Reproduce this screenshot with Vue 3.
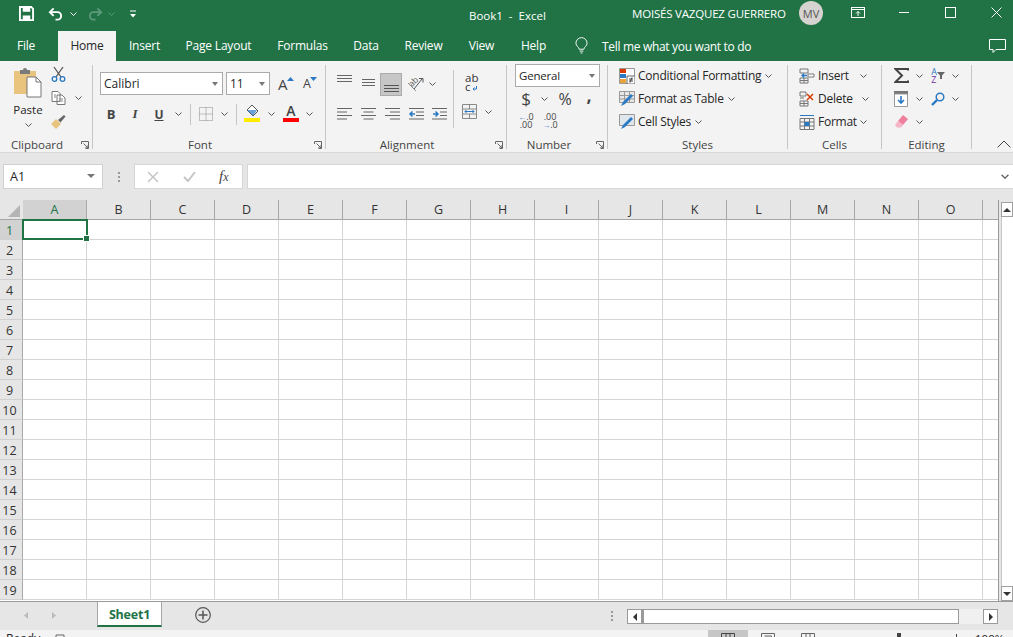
<template>
  <div class="excel">
    <!-- title bar -->
    <div class="titlebar">
      <div class="qat">
        <span class="slot s-save">
          <svg width="15" height="15" viewBox="0 0 16 16"><path d="M1 1h12l2 2v12H1z" fill="none" stroke="#fff" stroke-width="2"/><path d="M4 1h8v5H4zM4 10h8v5H4z" fill="#fff"/></svg>
        </span>
        <span class="slot s-undo">
          <svg width="15" height="14" viewBox="0 0 16 14"><path d="M6 1 2 5l4 4" fill="none" stroke="#fff" stroke-width="2"/><path d="M2 5h8a4 4 0 0 1 0 8H8" fill="none" stroke="#fff" stroke-width="2"/></svg>
        </span>
        <span class="slot s-chev"><svg class="chev" viewBox="0 0 7 4"><path d="M.5.5 3.5 3.500 6.500.5" stroke="#fff"/></svg></span>
        <span class="slot s-redo">
          <svg width="15" height="14" viewBox="0 0 16 14"><path d="M10 1l4 4-4 4" fill="none" stroke="#5c9a7b" stroke-width="2"/><path d="M14 5H6a4 4 0 0 0 0 8h2" fill="none" stroke="#5c9a7b" stroke-width="2"/></svg>
        </span>
        <span class="slot s-chev2"><svg class="chev" viewBox="0 0 7 4"><path d="M.5.5 3.5 3.500 6.500.5" stroke="#5c9a7b"/></svg></span>
        <span class="slot s-cust">
          <svg width="8" height="8" viewBox="0 0 8 8"><path d="M1 1h6" stroke="#fff"/><path d="M1 4h6L4 7.5z" fill="#fff"/></svg>
        </span>
      </div>
      <div class="doc-title">Book1&nbsp; -&nbsp; Excel</div>
      <div class="user">MOISÉS VAZQUEZ GUERRERO</div>
      <div class="avatar">MV</div>
      <div class="win">
        <span class="win-btn b-display">
          <svg width="14" height="11" viewBox="0 0 14 11"><rect x=".5" y=".5" width="13" height="10" fill="none" stroke="#fff"/><path d="M1 2.500h12" stroke="#fff"/><path d="M7 9V4.500M5 6.500l2-2 2 2" fill="none" stroke="#fff"/></svg>
        </span>
        <span class="win-btn b-min"><svg width="10" height="1" viewBox="0 0 10 1"><path d="M0 .5h10" stroke="#fff"/></svg></span>
        <span class="win-btn b-max"><svg width="11" height="11" viewBox="0 0 11 11"><rect x=".5" y=".5" width="10" height="10" fill="none" stroke="#fff"/></svg></span>
        <span class="win-btn b-close"><svg width="11" height="11" viewBox="0 0 11 11"><path d="M.5.5l10 10M10.500.5l-10 10" stroke="#fff"/></svg></span>
      </div>
    </div>

    <!-- tabs -->
    <div class="tabs">
      <div
        v-for="t in tabs"
        :key="t.name"
        class="tab"
        :class="{ active: t.name === 'Home' }"
        :style="{ width: t.w + 'px' }"
      >{{ t.name }}</div>
      <svg class="bulb" width="13" height="18" viewBox="0 0 14 18"><path d="M4.500 12.500C4.200 10 1 9 1 6a6 6 0 0 1 12 0c0 3-3.200 4-3.500 6.500z" fill="none" stroke="#fff"/><path d="M5 14.500h4M6 16.500h2" stroke="#fff"/></svg>
      <div class="tell">Tell me what you want to do</div>
      <svg class="comment" width="17" height="15" viewBox="0 0 17 15"><path d="M.5.500h16v10H7l-3 3v-3H.5z" fill="none" stroke="#fff"/></svg>
    </div>

    <!-- ribbon -->
    <div class="ribbon">
      <section class="group g-clip">
        <div class="clip-body">
          <div class="paste">
            <svg width="30" height="32" viewBox="0 0 30 32">
              <path d="M1 5h22v23H1z" fill="#e8c47f"/>
              <path d="M7 4h3a2 2 0 0 1 4 0h3v4H7z" fill="#7a7a7a"/>
              <path d="M14 11h9l5 5v15H14z" fill="#fff" stroke="#777"/>
              <path d="M23 11v5h5" fill="none" stroke="#777"/>
            </svg>
            <span class="paste-lbl">Paste</span>
            <svg class="chev" viewBox="0 0 7 4"><path d="M.5.5 3.500 3.500 6.500.5" stroke="#555"/></svg>
          </div>
          <div class="clip-tools">
            <svg width="15" height="16" viewBox="0 0 15 16"><path d="M3 1l7 10M12 1 5 11" stroke="#555" stroke-width="1.300"/><circle cx="3.500" cy="13" r="2.300" fill="none" stroke="#2b79c2" stroke-width="1.300"/><circle cx="11.500" cy="13" r="2.300" fill="none" stroke="#2b79c2" stroke-width="1.300"/></svg>
            <div class="copy-row">
              <svg width="15" height="14" viewBox="0 0 15 14"><path d="M1 .5h6l2 2v8H1zM6 4h5l3 3v6.500H6z" fill="#fff" stroke="#777"/><path d="M3 4h2M3 6h2M8 8h4M8 10h4" stroke="#888"/></svg>
              <svg class="chev" viewBox="0 0 7 4"><path d="M.5.5 3.500 3.500 6.500.5" stroke="#555"/></svg>
            </div>
            <svg class="painter" width="16" height="15" viewBox="0 0 16 15"><path d="M1 10 6 5l5 5-5 5z" fill="#e8c47f"/><path d="M8 6l6-5 1.500 1.500-5 6z" fill="#666"/></svg>
          </div>
        </div>
        <div class="group-label l-clip">Clipboard</div>
        <svg class="launcher" viewBox="0 0 8 8"><path d="M.5 3V.5h7v7H5M2.500 2.500 7 7M7 4v3H4" fill="none" stroke="#666"/></svg>
      </section>

      <section class="group g-font">
        <div class="font-row1">
          <div class="combo c-name">Calibri<i class="tri"></i></div>
          <div class="combo c-size">11<i class="tri"></i></div>
          <span class="big-a a-up">A<svg width="7" height="4" viewBox="0 0 7 4"><path d="M0 4l3.500-4L7 4z" fill="#2b79c2"/></svg></span>
          <span class="big-a a-down">A<svg width="7" height="4" viewBox="0 0 7 4"><path d="M0 0l3.500 4L7 0z" fill="#2b79c2"/></svg></span>
        </div>
        <div class="tools font-row2">
          <span class="cell w24 fb">B</span>
          <span class="cell w24 fi">I</span>
          <span class="cell w24 fu">U</span>
          <span class="cell w14"><svg class="chev" viewBox="0 0 7 4"><path d="M.5.5 3.500 3.500 6.500.5" stroke="#555"/></svg></span>
          <span class="cell w10"><i class="vsep"></i></span>
          <span class="cell w20 border-ic">
            <svg width="14" height="14" viewBox="0 0 14 14"><path d="M.5.500h13v13H.5zM7 .5v13M.5 7h13" fill="none" stroke="#888" stroke-dasharray="1 1"/></svg>
          </span>
          <span class="cell w18"><svg class="chev" viewBox="0 0 7 4"><path d="M.5.5 3.500 3.500 6.500.5" stroke="#555"/></svg></span>
          <span class="cell w6"><i class="vsep"></i></span>
          <span class="cell w26 fill-ic">
            <svg width="16" height="18" viewBox="0 0 16 18"><path d="M8 1l6 6-5 5-6-6z" fill="#fff" stroke="#555"/><path d="M3 6h10l-4 6z" fill="#2b79c2" opacity=".7"/><rect y="14" width="16" height="4" fill="#ffeb00"/></svg>
          </span>
          <span class="cell w12"><svg class="chev" viewBox="0 0 7 4"><path d="M.5.5 3.500 3.500 6.500.5" stroke="#555"/></svg></span>
          <span class="cell w28 color-a">A<i class="red-bar"></i></span>
          <span class="cell w8"><svg class="chev" viewBox="0 0 7 4"><path d="M.5.5 3.500 3.500 6.500.5" stroke="#555"/></svg></span>
        </div>
        <div class="group-label l-font">Font</div>
        <svg class="launcher" viewBox="0 0 8 8"><path d="M.5 3V.5h7v7H5M2.500 2.500 7 7M7 4v3H4" fill="none" stroke="#666"/></svg>
      </section>

      <section class="group g-align">
        <div class="align-body">
          <div class="align-left">
            <div class="tools al-row1">
              <span class="cell w24 v-top"><svg width="15" height="8" viewBox="0 0 15 8"><path d="M0 .5h15M0 3.500h15M0 6.500h15" stroke="#666"/></svg></span>
              <span class="cell w24 v-mid"><svg width="13" height="8" viewBox="0 0 13 8"><path d="M0 .5h13M0 3.500h13M0 6.500h13" stroke="#666"/></svg></span>
              <span class="cell w22 picked"><svg width="15" height="8" viewBox="0 0 15 8"><path d="M0 .5h15M0 3.500h15M0 6.500h15" stroke="#555"/></svg></span>
              <span class="cell w26">
                <svg class="orient" width="17" height="16" viewBox="0 0 17 16"><text x="2" y="10" transform="rotate(-45 5 7)" font-size="8.500" font-family="Open Sans, sans-serif" fill="#555">ab</text><path d="M1 7l8 8" stroke="#888"/><path d="M7 13 15 3" stroke="#555"/><path d="M12 2.500h4v4" fill="none" stroke="#555"/></svg>
              </span>
              <span class="cell w8"><svg class="chev" viewBox="0 0 7 4"><path d="M.5.5 3.500 3.500 6.500.5" stroke="#555"/></svg></span>
            </div>
            <div class="tools al-row2">
              <span class="cell w24"><svg width="15" height="12" viewBox="0 0 15 12"><path d="M0 .5h15M0 4h10M0 7.500h15M0 11h10" stroke="#666"/></svg></span>
              <span class="cell w24"><svg width="15" height="12" viewBox="0 0 15 12"><path d="M0 .5h15M2.500 4h10M0 7.500h15M2.500 11h10" stroke="#666"/></svg></span>
              <span class="cell w24"><svg width="15" height="12" viewBox="0 0 15 12"><path d="M0 .5h15M5 4h10M0 7.500h15M5 11h10" stroke="#666"/></svg></span>
              <span class="cell w24"><svg width="16" height="12" viewBox="0 0 16 12"><path d="M1 .5h15M8 4h8M8 7.500h8M1 11h15" stroke="#666"/><path d="M7 6H2M4.500 3.500 2 6l2.500 2.500" fill="none" stroke="#2b79c2" stroke-width="1.500"/></svg></span>
              <span class="cell w24"><svg width="16" height="12" viewBox="0 0 16 12"><path d="M0 .5h15M8 4h7M8 7.500h7M0 11h15" stroke="#666"/><path d="M1 6h5M3.500 3.500 6 6 3.500 8.500" fill="none" stroke="#2b79c2" stroke-width="1.500"/></svg></span>
            </div>
          </div>
          <i class="vsep tall"></i>
          <div class="align-right">
            <div class="wrap-txt">ab<br>c<svg width="5" height="5" viewBox="0 0 5 5"><path d="M4.500 0v3H1M2.500 1.500 1 3l1.500 1.500" fill="none" stroke="#2b79c2"/></svg></div>
            <div class="merge">
              <svg width="15" height="15" viewBox="0 0 15 15"><path d="M.5.500h14v14H.5zM.5 5h14M.5 10h14M7.500.5V5M7.500 10v4.500" fill="none" stroke="#888"/><path d="M3 7.500h9M4.500 6 3 7.500 4.500 9M10.500 6 12 7.500 10.500 9" fill="none" stroke="#2b79c2"/></svg>
              <svg class="chev" viewBox="0 0 7 4"><path d="M.5.5 3.500 3.500 6.500.5" stroke="#555"/></svg>
            </div>
          </div>
        </div>
        <div class="group-label l-align">Alignment</div>
        <svg class="launcher" viewBox="0 0 8 8"><path d="M.5 3V.5h7v7H5M2.500 2.500 7 7M7 4v3H4" fill="none" stroke="#666"/></svg>
      </section>

      <section class="group g-num">
        <div class="combo c-general">General<i class="tri"></i></div>
        <div class="tools num-row">
          <span class="cell w22 dollar">$</span>
          <span class="cell w14"><svg class="chev" viewBox="0 0 7 4"><path d="M.5.5 3.500 3.500 6.500.5" stroke="#555"/></svg></span>
          <span class="cell w28 pct">%</span>
          <span class="cell w20 comma">,</span>
        </div>
        <div class="tools dec-row">
          <span class="cell w24 dec"><b class="dec-a"><i class="ar">←</i>.0</b><b>.00</b></span>
          <span class="cell w24 dec"><b>.00</b><b class="dec-a"><i class="ar">→</i>.0</b></span>
        </div>
        <div class="group-label l-num">Number</div>
        <svg class="launcher" viewBox="0 0 8 8"><path d="M.5 3V.5h7v7H5M2.500 2.500 7 7M7 4v3H4" fill="none" stroke="#666"/></svg>
      </section>

      <section class="group g-styles">
        <div class="list">
          <div class="list-item">
            <svg width="16" height="16" viewBox="0 0 16 16"><path d="M.5.500h15v15H.5z" fill="#fff" stroke="#999"/><path d="M1 1h6v4H1z" fill="#d83b01"/><path d="M1 6h6v4H1z" fill="#2b79c2"/><path d="M1 11h6v4H1z" fill="#e8a33d"/><path d="M8 8h8v8H8z" fill="#fff" stroke="#666"/><path d="M10 11h4M10 13h4M13 9.500l-2 5" stroke="#444" fill="none"/></svg>
            <span>Conditional Formatting</span>
            <svg class="chev" viewBox="0 0 7 4"><path d="M.5.5 3.500 3.500 6.500.5" stroke="#555"/></svg>
          </div>
          <div class="list-item">
            <svg width="16" height="16" viewBox="0 0 16 16"><path d="M.5.500h15v11H.5z" fill="#e7e7e7" stroke="#999"/><path d="M5.500 1v10M10.500 1v10M1 4.500h14M1 8h14" stroke="#999"/><path d="M2 15l2-4 8-8 2 2-8 8z" fill="#2b79c2"/></svg>
            <span>Format as Table</span>
            <svg class="chev" viewBox="0 0 7 4"><path d="M.5.5 3.500 3.500 6.500.5" stroke="#555"/></svg>
          </div>
          <div class="list-item">
            <svg width="16" height="16" viewBox="0 0 16 16"><path d="M.5.500h15v11H.5z" fill="#dfe6ec" stroke="#999"/><path d="M2 15l2-4 8-8 2 2-8 8z" fill="#2b79c2"/></svg>
            <span>Cell Styles</span>
            <svg class="chev" viewBox="0 0 7 4"><path d="M.5.5 3.500 3.500 6.500.5" stroke="#555"/></svg>
          </div>
        </div>
        <div class="group-label l-styles">Styles</div>
      </section>

      <section class="group g-cells">
        <div class="list">
          <div class="list-item">
            <svg width="16" height="16" viewBox="0 0 16 16"><path d="M1 1h8v4H1zM1 10h8v5H1zM5 10v5M1 12.500h8" fill="none" stroke="#777"/><path d="M9 6h6v3H9z" fill="#fff" stroke="#777"/><path d="M8 7.500H3M5 5.500l-2 2 2 2" fill="none" stroke="#2b79c2" stroke-width="1.300"/></svg>
            <span>Insert</span>
            <svg class="chev c-ins" viewBox="0 0 7 4"><path d="M.5.500 3.500 3.500 6.500.5" stroke="#555"/></svg>
          </div>
          <div class="list-item">
            <svg width="16" height="16" viewBox="0 0 16 16"><path d="M1 1h6v4H1zM1 10h8v5H1zM5 10v5M1 12.500h8" fill="none" stroke="#777"/><path d="M1 7h4" stroke="#777"/><path d="M8 3l6 6M14 3 8 9" stroke="#d83b01" stroke-width="1.500"/></svg>
            <span>Delete</span>
            <svg class="chev c-del" viewBox="0 0 7 4"><path d="M.5.500 3.500 3.500 6.500.5" stroke="#555"/></svg>
          </div>
          <div class="list-item">
            <svg width="16" height="16" viewBox="0 0 16 16"><path d="M1 4.500h14v11H1zM1 8h14M1 12h14M5.500 4.500v11M10.500 4.500v11" fill="none" stroke="#777"/><path d="M1 1.500h14" stroke="#2b79c2"/><path d="M5.500 8h5v4h-5z" fill="#2b79c2"/></svg>
            <span>Format</span>
            <svg class="chev c-fmt" viewBox="0 0 7 4"><path d="M.5.500 3.500 3.500 6.500.5" stroke="#555"/></svg>
          </div>
        </div>
        <div class="group-label l-cells">Cells</div>
      </section>

      <section class="group g-edit">
        <div class="tools ed-row1">
          <span class="cell w24"><svg width="15" height="15" viewBox="0 0 15 15"><path d="M14 2.500V1H1.500L8 7.500 1.500 14H14v-1.500" fill="none" stroke="#444" stroke-width="2"/></svg></span>
          <span class="cell w12"><svg class="chev" viewBox="0 0 7 4"><path d="M.5.5 3.500 3.500 6.500.5" stroke="#555"/></svg></span>
          <span class="cell w26 sort">
            <b class="az"><i class="az-a">A</i><i class="az-z">Z</i></b>
            <svg width="8" height="7" viewBox="0 0 8 7"><path d="M0 0h8L5 3.500V7H3V3.500z" fill="#666"/></svg>
          </span>
          <span class="cell w8"><svg class="chev" viewBox="0 0 7 4"><path d="M.5.5 3.500 3.500 6.500.5" stroke="#555"/></svg></span>
        </div>
        <div class="tools ed-row2">
          <span class="cell w24"><svg width="14" height="16" viewBox="0 0 14 16"><path d="M0 0h14v3H0z" fill="#777"/><path d="M.5 3h13v12.500H.5z" fill="#fff" stroke="#999"/><path d="M7 5v7M4 9l3 3 3-3" fill="none" stroke="#2b79c2" stroke-width="1.600"/></svg></span>
          <span class="cell w12"><svg class="chev" viewBox="0 0 7 4"><path d="M.5.5 3.500 3.500 6.500.5" stroke="#555"/></svg></span>
          <span class="cell w26"><svg width="14" height="14" viewBox="0 0 14 14"><circle cx="9" cy="5" r="3.800" fill="none" stroke="#2b79c2" stroke-width="1.500"/><path d="M6 8l-5 5" stroke="#2b79c2" stroke-width="2.400"/></svg></span>
          <span class="cell w8"><svg class="chev" viewBox="0 0 7 4"><path d="M.5.5 3.500 3.500 6.500.5" stroke="#555"/></svg></span>
        </div>
        <div class="tools ed-row3">
          <span class="cell w24"><svg width="14" height="13" viewBox="0 0 14 13"><path d="M9 0l5 4-5 6-5-4z" fill="#ef7f9d"/><path d="M4 6l5 4-2 2.500H3L1 10z" fill="#f5b5c6"/></svg></span>
          <span class="cell w12"><svg class="chev" viewBox="0 0 7 4"><path d="M.5.5 3.500 3.500 6.500.5" stroke="#555"/></svg></span>
        </div>
        <div class="group-label l-edit">Editing</div>
      </section>

      <svg class="collapse" width="14" height="8" viewBox="0 0 14 8"><path d="M.5 7.500 7 1l6.500 6.500" fill="none" stroke="#444"/></svg>
    </div>

    <!-- formula bar -->
    <div class="formula-bar">
      <div class="name-box">A1<i class="tri"></i></div>
      <div class="grip"><i></i><i></i><i></i></div>
      <div class="fx-box">
        <svg width="12" height="12" viewBox="0 0 12 12"><path d="M1 1l10 10M11 1 1 11" stroke="#c6c6c6" stroke-width="1.500"/></svg>
        <svg width="13" height="11" viewBox="0 0 13 11"><path d="M1 6l4 4 7-9" fill="none" stroke="#c6c6c6" stroke-width="2"/></svg>
        <span class="fx"><i>f</i><i class="fx-x">x</i></span>
      </div>
      <div class="fx-input">
        <svg class="chev chev-fx" viewBox="0 0 7 4"><path d="M.5.500 3.500 3.500 6.500.5" stroke="#666" stroke-width="1.200"/></svg>
      </div>
    </div>

    <!-- sheet -->
    <div class="sheet-wrap">
      <div class="sheet">
        <div class="col-head">
          <div class="corner"><svg width="12" height="12" viewBox="0 0 12 12"><path d="M12 0v12H0z" fill="#b4b4b4"/></svg></div>
          <div v-for="c in cols" :key="c" class="col" :class="{ sel: c === 'A' }">{{ c }}</div>
          <div class="col rest"></div>
        </div>
        <div v-for="r in rows" :key="r" class="row">
          <div class="row-num" :class="{ sel: r === 1 }">{{ r }}</div>
          <div v-for="c in cols" :key="c" class="cell-box"></div>
          <div class="cell-box rest"></div>
        </div>
        <div class="selection"><i class="handle"></i></div>
      </div>
      <div class="vscroll">
        <div class="sb-btn"><i class="up"></i></div>
        <div class="sb-thumb"></div>
        <div class="sb-btn"><i class="down"></i></div>
      </div>
    </div>

    <!-- sheet tabs -->
    <div class="sheet-tabs">
      <svg class="nav-a" width="4" height="7" viewBox="0 0 4 7"><path d="M4 0v7L0 3.500z" fill="#bbb"/></svg>
      <svg class="nav-b" width="4" height="7" viewBox="0 0 4 7"><path d="M0 0v7l4-3.500z" fill="#bbb"/></svg>
      <div class="sheet-tab">Sheet1</div>
      <svg class="add" width="16" height="16" viewBox="0 0 16 16"><circle cx="8" cy="8" r="7.300" fill="none" stroke="#555" stroke-width="1.200"/><path d="M8 3.500v9M3.500 8h9" stroke="#555" stroke-width="1.500"/></svg>
      <div class="grip grip-h"><i></i><i></i><i></i></div>
      <div class="hscroll">
        <div class="hbtn"><i class="left"></i></div>
        <div class="hthumb"></div>
        <div class="htrack"></div>
        <div class="hbtn"><i class="right"></i></div>
      </div>
    </div>

    <!-- status bar -->
    <div class="status">
      <span class="ready">Ready</span>
      <svg class="macro" width="12" height="12" viewBox="0 0 12 12"><path d="M2 1h8v10H2z" fill="none" stroke="#666"/></svg>
      <div class="views">
        <span class="view on"><svg width="14" height="11" viewBox="0 0 14 11"><path d="M.5.500h13v10H.5zM5 .5v10M9 .5v10" fill="none" stroke="#444"/></svg></span>
        <span class="view"><svg width="14" height="11" viewBox="0 0 14 11"><path d="M.5.500h13v10H.5zM3.500 3h7v8" fill="none" stroke="#666"/></svg></span>
        <span class="view"><svg width="14" height="11" viewBox="0 0 14 11"><path d="M.5.500h13v10H.5zM5 .5v10M9 .5v10" fill="none" stroke="#666"/></svg></span>
      </div>
      <i class="zoom-knob"></i>
      <i class="zoom-plus"></i>
      <span class="zoom-val">100%</span>
    </div>
  </div>
</template>

<script setup>
const tabs = [
  { name: 'File', w: 52 },
  { name: 'Home', w: 58 },
  { name: 'Insert', w: 57 },
  { name: 'Page Layout', w: 91 },
  { name: 'Formulas', w: 77 },
  { name: 'Data', w: 50 },
  { name: 'Review', w: 65 },
  { name: 'View', w: 51 },
  { name: 'Help', w: 53 }
]
const cols = 'ABCDEFGHIJKLMNO'.split('')
const rows = Array.from({ length: 19 }, (_, i) => i + 1)
</script>

<style>
html, body { margin: 0; overflow: hidden; background: #fff; }
</style>

<style scoped>
.excel {
  width: 1013px; height: 637px; overflow: hidden;
  display: flex; flex-direction: column;
  font-family: "Open Sans", "Noto Sans", sans-serif; font-size: 11.5px; color: #262626;
}
svg { display: block; flex: none; }
.chev { width: 7px; height: 4px; fill: none; }
.orient { overflow: visible; }

/* title bar */
.titlebar { height: 31px; background: #217346; color: #fff; display: flex; align-items: center; }
.qat { width: 469px; display: flex; align-items: center; flex: none; padding-bottom: 4px; box-sizing: border-box; }
.slot { display: flex; justify-content: center; flex: none; }
.s-save { width: 15px; margin-left: 19px; }
.s-undo { width: 15px; margin-left: 14px; }
.s-chev { width: 7px; margin-left: 7px; }
.s-redo { width: 15px; margin-left: 11px; }
.s-chev2 { width: 7px; margin-left: 5px; }
.s-cust { width: 8px; margin-left: 14px; }
.doc-title { width: 163px; flex: none; font-size: 11.5px; }
.user { width: 167px; flex: none; font-size: 11.5px; white-space: nowrap; letter-spacing: -.2px; margin-bottom: 5px; }
.avatar {
  width: 24px; height: 24px; border-radius: 50%; background: #d6d3d0; color: #555; margin-bottom: 5px;
  display: flex; align-items: center; justify-content: center; font-size: 11px; flex: none;
}
.win { display: flex; align-items: center; margin-bottom: 6px; }
.win-btn { display: block; flex: none; }
.b-display { margin-left: 28px; }
.b-min { margin-left: 34px; }
.b-max { margin-left: 36px; }
.b-close { margin-left: 35px; }

/* tabs */
.tabs { height: 30px; background: #217346; display: flex; align-items: center; color: #fff; font-size: 12px; }
.tab { height: 30px; line-height: 29px; text-align: center; flex: none; letter-spacing: -.2px; }
.tab:first-child { margin-right: 6px; }
.tab.active { background: #f3f3f3; color: #262626; }
.bulb { margin-left: 15px; }
.tell { margin-left: 14px; width: 387px; letter-spacing: -.32px; }

/* ribbon */
.ribbon {
  height: 92px; box-sizing: border-box; background: #f3f3f3; border-bottom: 1px solid #d8d8d8;
  padding-top: 4px; display: flex; align-items: flex-start;
}
.group { height: 84px; box-sizing: border-box; border-right: 1px solid #c6c6c6; position: relative; flex: none; }
.group-label { position: absolute; left: 0; bottom: -4px; width: 100%; text-align: center; color: #444; font-size: 11.5px; line-height: 16px; letter-spacing: 0; }
.launcher { position: absolute; right: 3px; bottom: 0; width: 8px; height: 8px; }
.g-clip { width: 93px; }
.g-font { width: 233px; }
.g-align { width: 181px; }
.g-num { width: 101px; }
.g-styles { width: 180px; }
.g-cells { width: 94px; }
.g-edit { width: 90px; }
.l-clip { width: 74px; }
.l-font { width: 214px; }
.l-align { width: 162px; }
.l-num { width: 84px; }

.tools { display: flex; align-items: center; }
.cell { display: flex; align-items: center; justify-content: center; flex: none; }
.w6 { width: 6px; } .w8 { width: 8px; } .w10 { width: 10px; } .w12 { width: 12px; }
.w14 { width: 14px; } .w18 { width: 18px; } .w20 { width: 20px; } .w22 { width: 22px; }
.w24 { width: 24px; } .w26 { width: 26px; } .w28 { width: 28px; }
.vsep { display: block; width: 1px; height: 21px; background: #c6c6c6; }
.vsep.tall { height: 58px; margin-top: 5px; flex: none; }

/* clipboard */
.clip-body { display: flex; padding: 1px 0 0 12px; }
.paste { width: 32px; display: flex; flex-direction: column; align-items: center; }
.paste-lbl { margin-top: 4px; line-height: 16px; font-size: 11.5px; }
.paste .chev { margin-top: 5px; }
.clip-tools { margin-left: 7px; display: flex; flex-direction: column; gap: 6px; }
.copy-row { display: flex; align-items: center; gap: 9px; padding-top: 3px; }
.painter { margin-top: 3px; margin-left: -1px; }

/* font */
.combo {
  box-sizing: border-box; background: #fff; border: 1px solid #ababab; height: 23px;
  display: flex; align-items: center; position: relative; padding-left: 3px; font-size: 12px;
}
.tri {
  display: block; width: 0; height: 0; border: 3.500px solid transparent; border-top: 4px solid #777; border-bottom: 0;
  position: absolute; right: 4px; top: 9px;
}
.font-row1 { display: flex; align-items: center; padding: 7px 0 0 7px; }
.c-name { width: 123px; }
.c-size { width: 44px; margin-left: 3px; }
.big-a { display: flex; align-items: flex-start; flex: none; font-size: 15px; color: #444; line-height: 20px; }
.big-a svg { margin-top: 3px; margin-left: -1px; }
.a-up { margin-left: 8px; width: 25px; }
.a-down { font-size: 12.500px; margin-left: 0; }
.font-row2 { padding: 8px 0 0 6px; height: 22px; }
.fb { font-weight: 700; font-size: 13px; color: #444; }
.fi { font-style: italic; font-family: "Liberation Serif", serif; font-weight: 700; font-size: 13px; color: #444; }
.fu { font-weight: 700; font-size: 12px; text-decoration: underline; color: #444; }
.border-ic { padding-left: 2px; box-sizing: border-box; margin-top: -1px; }
.fill-ic { margin-top: -3px; }
.color-a { position: relative; font-size: 14px; font-weight: 600; color: #444; height: 20px; align-items: flex-start; line-height: 15px; margin-top: -2px; }
.red-bar { position: absolute; left: 6px; bottom: 1px; width: 16px; height: 4px; background: #f00; }

/* alignment */
.align-body { display: flex; }
.align-left { width: 127px; padding-left: 6px; box-sizing: border-box; }
.al-row1 { height: 24px; margin-top: 7px; }
.al-row2 { height: 22px; margin-top: 7px; }
.v-top { align-self: flex-start; padding-top: 3px; }
.v-mid { align-self: flex-start; padding-top: 7px; }
.picked { height: 23px; background: #c6c6c6; border: 1px solid #ababab; box-sizing: border-box; align-items: flex-end; padding-bottom: 2px; }
.align-right { margin-left: 5px; display: flex; flex-direction: column; }
.wrap-txt { font-size: 11.5px; line-height: 9px; margin: 8px 0 0 6px; color: #333; height: 19px; }
.wrap-txt svg { display: inline-block; margin-left: 1px; }
.merge { display: flex; align-items: center; gap: 8px; margin-top: 12px; padding-left: 3px; }

/* number */
.c-general { width: 85px; margin: -1px 0 0 8px; font-size: 11.5px; letter-spacing: -.2px; }
.num-row { padding: 0 0 0 8px; height: 23px; }
.dollar { font-size: 17px; color: #444; }
.pct { font-size: 16px; color: #444; }
.comma { font-size: 18px; font-weight: 700; color: #444; line-height: 8px; padding-bottom: 8px; }
.dec-row { padding-left: 7px; }
.dec { flex-direction: column; height: 22px; font-size: 9px; line-height: 8.500px; color: #444; }
.dec b { font-weight: 400; display: block; }
.dec-a { white-space: nowrap; }
.ar { font-style: normal; color: #2b79c2; font-size: 8px; }

/* lists */
.list { display: flex; flex-direction: column; padding: 0 0 0 11px; margin-top: -1px; }
.list-item { height: 23px; display: flex; align-items: center; font-size: 12px; letter-spacing: -.25px; white-space: nowrap; }
.list-item span { margin-left: 3px; }
.list-item .chev { margin-left: 4px; }
.list-item .c-ins { margin-left: 11px; }
.list-item .c-del { margin-left: 9px; }
.list-item .c-fmt { margin-left: 3px; }

/* editing */
.ed-row1, .ed-row2, .ed-row3 { height: 23px; padding-left: 7px; }
.ed-row1 { margin-top: -1px; }
.sort { gap: 0; }
.az { display: flex; flex-direction: column; font-size: 9px; line-height: 8px; font-weight: 400; }
.az i { font-style: normal; }
.az-a { color: #2b79c2; }
.az-z { color: #7030a0; }

.collapse { margin: 75px 0 0 25px; }

/* formula bar */
.formula-bar {
  height: 47px; box-sizing: border-box; background: #e6e6e6; padding-top: 11px; display: flex; align-items: flex-start;
}
.name-box {
  width: 100px; height: 25px; box-sizing: border-box; margin-left: 3px; background: #fff; border: 1px solid #d0d0d0;
  display: flex; align-items: center; padding-left: 6px; position: relative; font-size: 12.500px; flex: none;
}
.name-box .tri { right: 7px; top: 9px; border-width: 4px; border-top-width: 4px; border-bottom-width: 0; }
.grip { width: 31px; height: 25px; display: flex; flex-direction: column; align-items: center; justify-content: center; gap: 2px; flex: none; }
.grip i { display: block; width: 2px; height: 2px; background: #999; }
.fx-box {
  width: 109px; height: 25px; box-sizing: border-box; background: #fff; border: 1px solid #d6d6d6; flex: none;
  display: flex; align-items: center; padding-left: 12px;
}
.fx-box svg + svg { margin-left: 24px; }
.fx { margin-left: 23px; font-family: "Liberation Serif", serif; font-size: 15px; color: #444; }
.fx-x { font-size: 12px; }
.fx-input {
  width: 766px; margin-left: 4px; height: 25px; box-sizing: border-box; background: #fff; border: 1px solid #d6d6d6; border-right: 0;
  position: relative;
}
.chev-fx { position: absolute; right: 4px; top: 9px; width: 8px; height: 5px; }

/* sheet */
.sheet-wrap { display: flex; height: 401px; background: #e6e6e6; }
.sheet { width: 998px; flex: none; position: relative; overflow: hidden; background: #fff; border-right: 1px solid #9a9a9a; margin-right: -1px; }
.col-head { display: flex; height: 20px; box-sizing: border-box; background: #e6e6e6; border-bottom: 1px solid #a6a6a6; }
.corner { width: 23px; flex: none; box-sizing: border-box; padding: 5px 0 0 8px; }
.col {
  width: 64px; flex: none; box-sizing: border-box; border-right: 1px solid #a8a8a8; text-align: center;
  line-height: 19px; font-size: 12.5px; color: #333;
}
.col.rest { flex: 1; width: auto; border-right: 0; }
.col.sel { background: #d2d2d2; color: #217346; }
.row { display: flex; height: 20px; }
.row-num {
  width: 23px; flex: none; box-sizing: border-box; background: #e6e6e6; border-right: 1px solid #a8a8a8; border-bottom: 1px solid #d0d0d0;
  text-align: center; line-height: 21px; font-size: 12.5px; color: #333; padding-right: 3px;
}
.row-num.sel { background: #d2d2d2; color: #217346; }
.cell-box { width: 64px; flex: none; box-sizing: border-box; border-right: 1px solid #d4d4d4; border-bottom: 1px solid #d4d4d4; }
.cell-box.rest { flex: 1; width: auto; border-right: 0; }
.selection {
  position: absolute; left: 22px; top: 19px; width: 66px; height: 21px; box-sizing: border-box; border: 2px solid #217346;
}
.handle {
  position: absolute; right: -4px; bottom: -4px; width: 5px; height: 5px; background: #217346; border: 1px solid #fff;
}

/* scrollbars */
.vscroll { width: 12px; margin: 2px 0 0 3px; display: flex; flex-direction: column; flex: none; }
.sb-btn { height: 15px; box-sizing: border-box; background: #fff; border: 1px solid #a0a0a0; display: flex; align-items: center; justify-content: center; flex: none; }
.sb-thumb { flex: 1; background: #fff; border-left: 1px solid #c6c6c6; }
.up { border: 4px solid transparent; border-bottom: 4px solid #333; border-top: 0; }
.down { border: 4px solid transparent; border-top: 4px solid #333; border-bottom: 0; }

.sheet-tabs {
  height: 29px; box-sizing: border-box; background: #e6e6e6; border-top: 1px solid #9a9a9a; display: flex; align-items: flex-start; flex: none;
}
.nav-a { margin: 10px 0 0 24px; }
.nav-b { margin: 10px 0 0 24px; }
.sheet-tab {
  width: 65px; height: 25px; box-sizing: border-box; margin: 0 0 0 41px; background: #fff; border-left: 1px solid #a6a6a6; border-right: 1px solid #a6a6a6;
  border-bottom: 2px solid #217346; text-align: center; font-weight: 700; font-size: 12.500px; color: #217346; line-height: 25px; letter-spacing: -.2px;
}
.add { margin: 5px 0 0 33px; }
.grip-h { width: 4px; margin: 1px 0 0 399px; }
.hscroll { width: 371px; height: 15px; margin: 7px 0 0 13px; display: flex; flex: none; }
.hbtn { width: 15px; box-sizing: border-box; background: #fff; border: 1px solid #9a9a9a; display: flex; align-items: center; justify-content: center; flex: none; }
.hthumb { width: 317px; box-sizing: border-box; background: #fff; border: 1px solid #9a9a9a; border-left: 2px solid #9a9a9a; flex: none; }
.htrack { flex: 1; background: #f0f0f0; }
.left { border: 4px solid transparent; border-right: 4px solid #333; border-left: 0; }
.right { border: 4px solid transparent; border-left: 4px solid #333; border-right: 0; }

/* status bar */
.status { height: 7px; overflow: hidden; flex: none; background: #f3f3f3; position: relative; display: flex; align-items: flex-start; }
.ready { margin: 1px 0 0 6px; width: 46px; line-height: 16px; font-size: 12px; }
.macro { margin: 4px 0 0 2px; }
.views { display: flex; margin-left: 642px; }
.view { width: 40px; height: 7px; display: flex; justify-content: center; padding-top: 3px; box-sizing: border-box; }
.view.on { background: #c6c6c6; }
.zoom-knob { display: block; width: 4px; height: 5px; background: #444; margin: 3px 0 0 69px; flex: none; }
.zoom-plus { display: block; width: 1px; height: 3px; background: #444; margin: 4px 0 0 55px; flex: none; }
.zoom-val { margin: 1px 0 0 18px; font-size: 11.5px; line-height: 16px; white-space: nowrap; }
</style>
